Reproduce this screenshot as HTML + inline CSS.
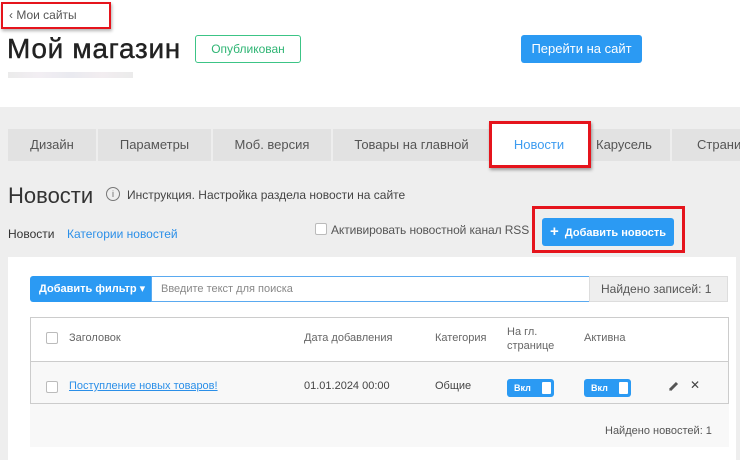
<!DOCTYPE html>
<html><head><meta charset="utf-8"><style>
*{box-sizing:border-box;margin:0;padding:0}
body{width:740px;height:460px;overflow:hidden;position:relative;background:#fff;font-family:"Liberation Sans","DejaVu Sans",sans-serif;color:#333}
.a{position:absolute}
.gray{left:0;top:107px;width:740px;height:353px;background:#eeeeee}
.tab{position:absolute;top:129px;height:32px;background:#e2e2e2;font-size:13px;color:#555;text-align:center;line-height:32px}
.btn{background:#2b9af3;color:#fff;border-radius:3px}
.sw{position:absolute;width:47px;height:18px;background:#2b9af3;border-radius:3px;color:#fff;font-size:9px;font-weight:bold;line-height:18px;padding-left:7px}
.sw:after{content:"";position:absolute;right:3px;top:3px;width:9px;height:12px;background:#fff;border-radius:1px}
.cb{position:absolute;width:12px;height:12px;border:1px solid #bbb;border-radius:2px;background:#fff}
</style></head><body>
<div class="a" style="left:1px;top:2px;width:110px;height:27px;border:2px solid #e5141c;box-shadow:1px 2px 3px rgba(0,0,0,.3)"></div>
<div class="a" style="left:9px;top:8px;font-size:12px;color:#555">&lsaquo; Мои сайты</div>
<div class="a" style="left:7px;top:33px;font-size:28px;color:#222;letter-spacing:.7px;-webkit-text-stroke:.4px #222">Мой магазин</div>
<div class="a" style="left:195px;top:35px;width:106px;height:28px;border:1px solid #3cc486;border-radius:3px;color:#2fb574;font-size:12px;text-align:center;line-height:26px">Опубликован</div>
<div class="a" style="left:8px;top:72px;width:125px;height:6px;background:linear-gradient(90deg,#e6e6e6,#efeaf0,#e4e5ec,#efe9ed,#e6e6e6);opacity:.8"></div>
<div class="a btn" style="left:521px;top:35px;width:121px;height:28px;font-size:13px;text-align:center;line-height:28px">Перейти на сайт</div>
<div class="a gray"></div>
<div class="tab" style="left:8px;width:88px">Дизайн</div>
<div class="tab" style="left:98px;width:113px">Параметры</div>
<div class="tab" style="left:213px;width:118px">Моб. версия</div>
<div class="tab" style="left:333px;width:157px">Товары на главной</div>
<div class="tab" style="left:590px;width:80px;text-align:left;padding-left:6px">Карусель</div>
<div class="tab" style="left:672px;width:70px;text-align:left;padding-left:25px">Страни</div>
<div class="a" style="left:489px;top:121px;width:102px;height:47px;border:3px solid #e5141c;box-shadow:1px 2px 3px rgba(0,0,0,.35);background:#fff"></div>
<div class="a" style="left:492px;top:129px;width:94px;height:32px;text-align:center;line-height:32px;color:#3d9cf0;font-size:13px">Новости</div>
<div class="a" style="left:8px;top:183px;font-size:22px;color:#333">Новости</div>
<div class="a" style="left:106px;top:187px;width:14px;height:14px;border:1px solid #777;border-radius:50%;font-size:9px;text-align:center;line-height:12px;color:#666">i</div>
<div class="a" style="left:127px;top:188px;font-size:12px;color:#444">Инструкция. Настройка раздела новости на сайте</div>
<div class="a" style="left:8px;top:227px;font-size:12px;color:#333">Новости</div>
<div class="a" style="left:67px;top:227px;font-size:12px;color:#2b8fe8">Категории новостей</div>
<div class="cb" style="left:315px;top:223px"></div>
<div class="a" style="left:331px;top:223px;font-size:12px;color:#555;letter-spacing:-.1px">Активировать новостной канал RSS</div>
<div class="a" style="left:532px;top:206px;width:153px;height:47px;border:3px solid #e5141c"></div>
<div class="a btn" style="left:542px;top:218px;width:132px;height:28px;font-size:11px;font-weight:bold;line-height:28px;padding-left:8px;white-space:nowrap"><span style="font-size:15px">+</span>&nbsp;&nbsp;Добавить новость</div>
<div class="a" style="left:8px;top:257px;width:728px;height:203px;background:#fff"></div>
<div class="a btn" style="left:30px;top:276px;width:122px;height:26px;border-radius:3px 0 0 3px;font-size:11px;font-weight:bold;line-height:26px;padding-left:9px">Добавить фильтр ▾</div>
<div class="a" style="left:151px;top:276px;width:439px;height:26px;border:1px solid #5aaaf0;font-size:11px;color:#888;line-height:24px;padding-left:9px">Введите текст для поиска</div>
<div class="a" style="left:589px;top:276px;width:139px;height:26px;background:#eeeeee;border:1px solid #ddd;font-size:12px;color:#555;line-height:24px;padding-left:11px">Найдено записей: 1</div>
<div class="a" style="left:30px;top:317px;width:699px;height:87px;border:1px solid #ccc;background:#fff"></div>
<div class="a" style="left:31px;top:361px;width:697px;height:42px;background:#f8f8f8;border-top:1px solid #ccc"></div>
<div class="a" style="left:30px;top:404px;width:699px;height:43px;background:#f8f8f8"></div>
<div class="cb" style="left:46px;top:332px"></div>
<div class="a" style="left:69px;top:332px;font-size:11px;color:#666">Заголовок</div>
<div class="a" style="left:304px;top:332px;font-size:11px;color:#666">Дата добавления</div>
<div class="a" style="left:435px;top:332px;font-size:11px;color:#666">Категория</div>
<div class="a" style="left:507px;top:325px;font-size:11px;color:#666;line-height:14px">На гл.<br>странице</div>
<div class="a" style="left:584px;top:332px;font-size:11px;color:#666">Активна</div>
<div class="cb" style="left:46px;top:381px"></div>
<div class="a" style="left:69px;top:380px;font-size:11px;color:#2b8fe8;text-decoration:underline">Поступление новых товаров!</div>
<div class="a" style="left:304px;top:380px;font-size:11px;color:#444">01.01.2024 00:00</div>
<div class="a" style="left:435px;top:380px;font-size:11px;color:#444">Общие</div>
<div class="sw" style="left:507px;top:379px">Вкл</div>
<div class="sw" style="left:584px;top:379px">Вкл</div>
<svg class="a" style="left:668px;top:380px" width="12" height="12" viewBox="0 0 12 12"><path d="M2 10 L9 3" stroke="#555" stroke-width="3"/><path d="M1 11 L2.5 8.5 L3.5 9.5Z" fill="#555"/></svg>
<div class="a" style="left:690px;top:378px;font-size:12px;font-weight:bold;color:#444">✕</div>
<div class="a" style="left:605px;top:425px;font-size:11px;color:#555">Найдено новостей: 1</div>
<div class="a" style="left:737px;top:270px;width:3px;height:190px;background:#eee"></div>
</body></html>
